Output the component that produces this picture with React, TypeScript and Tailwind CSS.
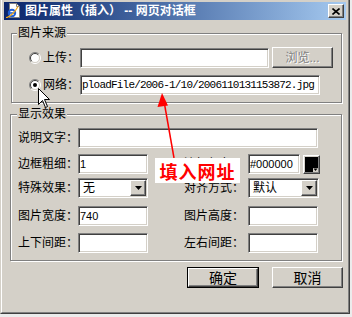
import React from "react";

const SUNKEN =
  "border border-t-[#808080] border-l-[#808080] border-b-white border-r-white shadow-[inset_1px_1px_0_#404040,inset_-1px_-1px_0_#d4d0c8]";
const RAISED =
  "border border-t-white border-l-white border-b-[#404040] border-r-[#404040] shadow-[inset_-1px_-1px_0_#808080]";
const GROUP =
  "border border-[#808080] shadow-[inset_1px_1px_0_#ffffff,1px_1px_0_#ffffff] flex flex-col";

function Radio({ checked }: { checked?: boolean }) {
  return (
    <svg width="12" height="12" viewBox="0 0 12 12" className="shrink-0">
      <circle cx="6" cy="6" r="4.5" fill="#fff" />
      <path d="M2.1 9.9 A5.5 5.5 0 0 1 9.9 2.1" fill="none" stroke="#808080" />
      <path d="M9.9 2.1 A5.5 5.5 0 0 1 2.1 9.9" fill="none" stroke="#ffffff" />
      <path d="M2.8 9.2 A4.5 4.5 0 0 1 9.2 2.8" fill="none" stroke="#404040" />
      <path d="M9.2 2.8 A4.5 4.5 0 0 1 2.8 9.2" fill="none" stroke="#d4d0c8" />
      {checked && <circle cx="6" cy="6" r="2" fill="#000" />}
    </svg>
  );
}

function TextBox({
  className,
  value,
  mono,
}: {
  className: string;
  value?: string;
  mono?: boolean;
}) {
  return (
    <div
      className={`${SUNKEN} ${className} bg-white flex items-center pl-[1px] overflow-hidden whitespace-nowrap`}
    >
      {value && (
        <span
          className={
            mono
              ? "font-['Liberation_Mono',monospace] text-[11px] tracking-[-0.8px] leading-[14px]"
              : "text-[11px] leading-[14px]"
          }
        >
          {value}
        </span>
      )}
    </div>
  );
}

function Select({ className, value }: { className: string; value: string }) {
  return (
    <div className={`${SUNKEN} ${className} h-[20px] bg-white flex items-center p-[1px]`}>
      <span className="ml-[3px] text-[12px] leading-[14px]">{value}</span>
      <div className={`${RAISED} ml-auto w-[16px] h-full flex items-center justify-center bg-[#d4d0c8]`}>
        <svg width="7" height="4" viewBox="0 0 7 4">
          <path d="M0 0h7L3.5 4z" fill="#000" />
        </svg>
      </div>
    </div>
  );
}

function Label({ className, children }: { className?: string; children: React.ReactNode }) {
  return (
    <span className={`text-[12px] leading-[14px] whitespace-nowrap shrink-0 ${className ?? ""}`}>
      {children}
    </span>
  );
}

export default function App() {
  return (
    <div className="relative w-[352px] h-[317px] overflow-hidden bg-[#ececec] font-['Liberation_Sans','Noto_Sans_CJK_SC',sans-serif] text-black">
      <div className="-mt-[2px] w-[350px] h-[316px] border border-t-[#d4d0c8] border-l-[#d4d0c8] border-b-[#404040] border-r-[#404040]">
        <div className="h-full border border-t-white border-l-white border-b-[#808080] border-r-[#808080] bg-[#d4d0c8] p-[2px] flex flex-col">
          {/* title bar */}
          <div className="h-[18px] shrink-0 flex items-center bg-linear-to-r from-[#0a246a] to-[#a6caf0] pl-[1px] pr-[2px]">
            <svg width="16" height="16" viewBox="0 0 16 16" className="shrink-0">
              <path d="M4.5 0.5h7l3 3v11h-10z" fill="#fff" stroke="#808080" />
              <path d="M11.5 0.5v3h3" fill="none" stroke="#808080" />
              <circle cx="7" cy="10" r="3.2" fill="none" stroke="#1f5fd6" strokeWidth="2" />
              <path d="M4 10h6" stroke="#1f5fd6" strokeWidth="1.6" />
              <path d="M1 14.5c3 0 9-5 12-11" stroke="#f2a81d" strokeWidth="1.2" fill="none" />
            </svg>
            <span className="ml-[4px] text-white font-bold text-[12px] leading-[14px] whitespace-nowrap">
              图片属性（插入） -- 网页对话框
            </span>
            <div className={`${RAISED} ml-auto w-[16px] h-[14px] bg-[#d4d0c8] flex items-center justify-center`}>
              <svg width="8" height="7" viewBox="0 0 8 7">
                <path d="M0.5 0.5l7 6M7.5 0.5l-7 6" stroke="#000" strokeWidth="1.6" />
              </svg>
            </div>
          </div>

          {/* body */}
          <div className="flex-1 flex flex-col text-[12px]">
            {/* group 1 */}
            <div className={`${GROUP} ml-[7px] mt-[13px] w-[331px] h-[70px]`}>
              <span className="self-start ml-[5px] px-[1px] -mt-[8px] h-[15px] leading-[15px] bg-[#d4d0c8] text-[12px]">
                图片来源
              </span>
              <div className="mt-[6px] h-[21px] flex items-center pl-[17px]">
                <Radio />
                <Label className="ml-[2px] w-[37px]">上传：</Label>
                <TextBox className="w-[189px] h-[20px]" />
                <div className={`${RAISED} ml-[3px] w-[61px] h-[21px] flex items-center justify-center`}>
                  <span className="text-[12px] leading-[14px] text-[#808080] [text-shadow:1px_1px_0_#ffffff]">
                    浏览...
                  </span>
                </div>
              </div>
              <div className="mt-[7px] h-[20px] flex items-center pl-[17px]">
                <Radio checked />
                <Label className="ml-[2px] w-[37px]">网络：</Label>
                <TextBox
                  className="w-[240px] h-[20px]"
                  value="ploadFile/2006-1/10/2006110131153872.jpg"
                  mono
                />
              </div>
            </div>

            {/* group 2 */}
            <div className={`${GROUP} ml-[6px] mt-[11px] w-[332px] h-[147px]`}>
              <span className="self-start ml-[6px] px-[1px] -mt-[8px] h-[15px] leading-[15px] bg-[#d4d0c8] text-[12px]">
                显示效果
              </span>
              <div className="mt-[6px] h-[20px] flex items-center pl-[7px]">
                <Label className="w-[60px]">说明文字：</Label>
                <TextBox className="w-[240px] h-[20px]" />
              </div>
              <div className="mt-[6px] h-[20px] flex items-center pl-[7px]">
                <Label className="w-[60px]">边框粗细：</Label>
                <TextBox className="w-[70px] h-[20px]" value="1" />
                <Label className="w-[96px] text-right">边框颜色：</Label>
                <TextBox className="ml-[4px] w-[52px] h-[20px]" value="#000000" />
                <div className={`${RAISED} ml-[3px] w-[17px] h-[19px] bg-[#d4d0c8] p-[1px]`}>
                  <svg width="13" height="15" viewBox="0 0 13 15" className="block">
                    <rect x="0" y="0" width="13" height="15" fill="#000" />
                    <rect x="8" y="11" width="5" height="4" fill="#d4d0c8" />
                    <path d="M8.5 11.5h4l-2 2.5z" fill="#000" />
                  </svg>
                </div>
              </div>
              <div className="mt-[4px] h-[20px] flex items-center pl-[7px]">
                <Label className="w-[60px]">特殊效果：</Label>
                <Select className="w-[70px]" value="无" />
                <Label className="w-[96px] text-right">对齐方式：</Label>
                <Select className="ml-[4px] w-[71px]" value="默认" />
              </div>
              <div className="mt-[8px] h-[20px] flex items-center pl-[7px]">
                <Label className="w-[60px]">图片宽度：</Label>
                <TextBox className="w-[70px] h-[20px]" value="740" />
                <Label className="w-[96px] text-right">图片高度：</Label>
                <TextBox className="ml-[4px] w-[70px] h-[20px]" />
              </div>
              <div className="mt-[7px] h-[20px] flex items-center pl-[7px]">
                <Label className="w-[60px]">上下间距：</Label>
                <TextBox className="w-[70px] h-[20px]" />
                <Label className="w-[96px] text-right">左右间距：</Label>
                <TextBox className="ml-[4px] w-[70px] h-[20px]" />
              </div>
            </div>

            {/* buttons */}
            <div className="mt-[6px] flex justify-end gap-[13px] pr-[3px]">
              <div className="w-[72px] h-[21px] border border-black">
                <div className={`${RAISED} h-full flex items-center justify-center`}>
                  <span className="text-[14px] leading-[16px]">确定</span>
                </div>
              </div>
              <div className={`${RAISED} w-[71px] h-[21px] flex items-center justify-center`}>
                <span className="text-[14px] leading-[16px]">取消</span>
              </div>
            </div>
          </div>
        </div>
      </div>

      {/* annotation arrow */}
      <svg
        className="absolute left-0 top-0 pointer-events-none"
        width="352"
        height="317"
        viewBox="0 0 352 317"
      >
        <line x1="174" y1="158" x2="164.5" y2="104" stroke="#ff0000" strokeWidth="1.5" />
        <polygon points="162,93 157.5,107 168,105.5" fill="#ff0000" />
      </svg>

      {/* annotation label */}
      <div className="absolute left-[155px] top-[158px] w-[85px] h-[25px] bg-white flex items-center justify-center">
        <span className="text-[#ff0000] font-bold text-[18px] leading-[20px] tracking-[1px] font-['Noto_Sans_CJK_SC',sans-serif]">
          填入网址
        </span>
      </div>

      {/* mouse cursor */}
      <svg className="absolute left-[38px] top-[88px] pointer-events-none" width="13" height="21" viewBox="0 0 13 21">
        <path
          d="M0.5 0.5 L0.5 16.5 L4.5 12.5 L7.5 19.5 L9.5 18.5 L6.5 11.5 L11.5 11.5 Z"
          fill="#fff"
          stroke="#000"
        />
      </svg>
    </div>
  );
}
